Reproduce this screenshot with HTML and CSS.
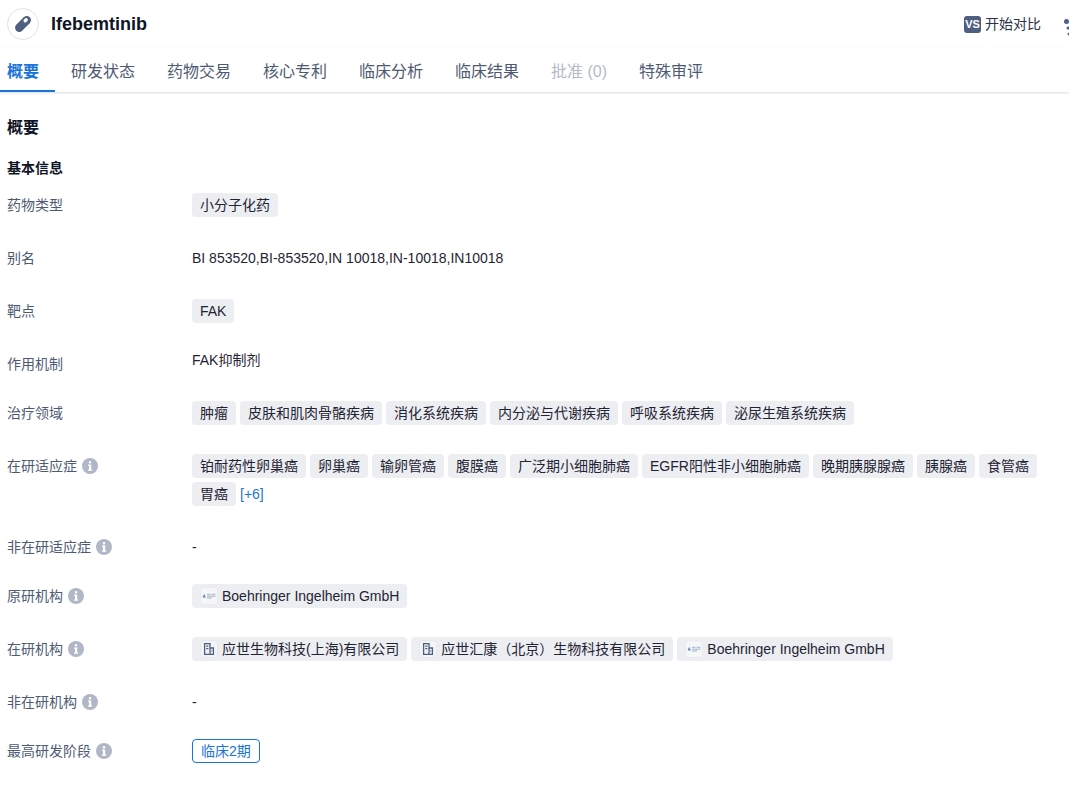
FILE: index.html
```html
<!DOCTYPE html>
<html lang="zh">
<head>
<meta charset="utf-8">
<title>Ifebemtinib</title>
<link rel="stylesheet" href="styles.css">
</head>
<body>
<svg class="defs" width="0" height="0" aria-hidden="true">
  <symbol id="info" viewBox="0 0 16 16">
    <circle cx="8" cy="8" r="8" fill="#b1b7c6"/>
    <rect x="6.800" y="3" width="2.400" height="2.400" rx="1" fill="#fff"/>
    <path d="M6 6.500h3.200v5h1v1.300H6v-1.300h1v-3.700H6z" fill="#fff"/>
  </symbol>
  <symbol id="logo" viewBox="0 0 18 18">
    <rect x=".5" y=".5" width="17" height="17" rx="3" fill="#f5f6f8" stroke="#e8eaef"/>
    <path d="M2.500 10.500 4.200 6.800l1.700 3.700z" fill="#6d8ab5"/>
    <path d="M7 7.300h3.500M11.500 7.300h4M7 9.200h8.500M7 11h5" stroke="#a3b2c8" stroke-width="1"/>
  </symbol>
  <symbol id="bldg" viewBox="0 0 18 18">
    <rect x=".5" y=".5" width="17" height="17" rx="3" fill="#f3f4f7" stroke="#e6e8ed"/>
    <path d="M4.600 14.400V3.600h5.400v10.800zM10 8h3.400v6.400H10M6.200 6.200h2.200M6.200 8.700h2.200M11.300 10.800h.8" fill="none" stroke="#4e5f80" stroke-width="1.300"/>
  </symbol>
</svg>
<header class="top">
  <div class="brand">
    <span class="avatar">
      <svg width="20" height="20" viewBox="0 0 20 20"><g transform="rotate(45 10 10)"><rect x="5.800" y=".5" width="8.400" height="19" rx="4.200" fill="#4e5f80"/><rect x="7.500" y="3" width="3.400" height="4.800" rx="1.700" fill="#fff"/></g></svg>
    </span>
    <h1 class="name">Ifebemtinib</h1>
  </div>
  <div class="actions">
    <span class="vs">VS</span><span class="compare">开始对比</span>
    <svg class="graph" width="16" height="18" viewBox="0 0 16 18"><circle cx="2.500" cy="2.500" r="2.500" fill="#4e5f80"/><circle cx="4" cy="9" r="1.500" fill="#4e5f80"/><circle cx="5" cy="15" r="1.500" fill="#4e5f80"/></svg>
  </div>
</header>
<nav class="tabs">
  <a class="tab active">概要</a>
  <a class="tab">研发状态</a>
  <a class="tab">药物交易</a>
  <a class="tab">核心专利</a>
  <a class="tab">临床分析</a>
  <a class="tab">临床结果</a>
  <a class="tab disabled">批准 (0)</a>
  <a class="tab">特殊审评</a>
</nav>
<main class="content">
  <h2 class="section">概要</h2>
  <h3 class="sub">基本信息</h3>
  <dl class="info">
    <div class="row tall"><dt class="label">药物类型</dt><dd class="val"><span class="tag">小分子化药</span></dd></div>
    <div class="row tall"><dt class="label">别名</dt><dd class="val text">BI 853520,BI-853520,IN 10018,IN-10018,IN10018</dd></div>
    <div class="row tall"><dt class="label">靶点</dt><dd class="val"><span class="tag">FAK</span></dd></div>
    <div class="row"><dt class="label">作用机制</dt><dd class="val lifted">FAK抑制剂</dd></div>
    <div class="row tall"><dt class="label">治疗领域</dt><dd class="val"><span class="tag">肿瘤</span><span class="tag">皮肤和肌肉骨骼疾病</span><span class="tag">消化系统疾病</span><span class="tag">内分泌与代谢疾病</span><span class="tag">呼吸系统疾病</span><span class="tag">泌尿生殖系统疾病</span></dd></div>
    <div class="row tall"><dt class="label">在研适应症<svg class="i"><use href="#info"/></svg></dt><dd class="val"><span class="tag">铂耐药性卵巢癌</span><span class="tag">卵巢癌</span><span class="tag">输卵管癌</span><span class="tag">腹膜癌</span><span class="tag">广泛期小细胞肺癌</span><span class="tag">EGFR阳性非小细胞肺癌</span><span class="tag">晚期胰腺腺癌</span><span class="tag">胰腺癌</span><span class="tag">食管癌</span><span class="tag">胃癌</span><a class="more">[+6]</a></dd></div>
    <div class="row"><dt class="label">非在研适应症<svg class="i"><use href="#info"/></svg></dt><dd class="val text">-</dd></div>
    <div class="row tall"><dt class="label">原研机构<svg class="i"><use href="#info"/></svg></dt><dd class="val"><span class="tag org"><svg class="ic"><use href="#logo"/></svg>Boehringer Ingelheim GmbH</span></dd></div>
    <div class="row tall"><dt class="label">在研机构<svg class="i"><use href="#info"/></svg></dt><dd class="val"><span class="tag org"><svg class="ic"><use href="#bldg"/></svg>应世生物科技(上海)有限公司</span><span class="tag org"><svg class="ic"><use href="#bldg"/></svg>应世汇康（北京）生物科技有限公司</span><span class="tag org"><svg class="ic"><use href="#logo"/></svg>Boehringer Ingelheim GmbH</span></dd></div>
    <div class="row"><dt class="label">非在研机构<svg class="i"><use href="#info"/></svg></dt><dd class="val text">-</dd></div>
    <div class="row"><dt class="label">最高研发阶段<svg class="i"><use href="#info"/></svg></dt><dd class="val"><span class="stage">临床2期</span></dd></div>
  </dl>
</main>
</body>
</html>
```
FILE: styles.css
```css
* { box-sizing: border-box; }
html, body { margin: 0; height: 100%; overflow: hidden; }
body {
  background: #fff;
  color: #1f2433;
  font-family: "Liberation Sans", "Noto Sans CJK SC", sans-serif;
  font-size: 14px;
}
.defs { position: absolute; }
.top {
  height: 48px;
  display: flex;
  align-items: center;
  justify-content: space-between;
  padding-left: 7px;
}
.brand { display: flex; align-items: center; gap: 12px; }
.avatar {
  width: 32px;
  height: 32px;
  border: 1px solid #dfe2e9;
  border-radius: 50%;
  display: flex;
  align-items: center;
  justify-content: center;
}
.name { margin: 0; font-size: 18px; line-height: 24px; font-weight: 700; color: #0f1526; }
.actions { display: flex; align-items: center; width: 105px; flex: none; overflow: hidden; }
.vs {
  width: 17px;
  height: 17px;
  flex: none;
  border-radius: 3px;
  background: #4e5f80;
  color: #fff;
  font-size: 11px;
  font-weight: 700;
  line-height: 17px;
  text-align: center;
  margin-right: 4px;
}
.compare { color: #2c3347; line-height: 20px; flex: none; }
.graph { flex: none; margin-left: 23px; margin-top: 7px; }
.tabs {
  height: 44px;
  display: flex;
  box-shadow: 0 1px 2px rgba(30, 40, 70, .16);
}
.tab {
  padding: 0 16px;
  font-size: 16px;
  line-height: 48px;
  height: 44px;
  color: #4e5a73;
}
.tab:first-child { padding-left: 7px; }
.tab.active { color: #1a73d9; font-weight: 700; border-bottom: 2px solid #1a73d9; }
.tab.disabled { color: #b4bac6; }
.content { padding: 0 20px 0 7px; }
.section { margin: 25px 0 0; font-size: 16px; line-height: 22px; font-weight: 700; color: #0f1526; }
.sub { margin: 20px 0 0; font-size: 14px; line-height: 18px; font-weight: 700; color: #0f1526; }
.info { margin: 16px 0 0; }
.row { display: flex; margin-bottom: 25px; min-height: 24px; }
.label {
  width: 185px;
  flex: none;
  display: flex;
  align-items: center;
  height: 24px;
  color: #4e5a73;
  line-height: 24px;
}
.i { width: 16px; height: 16px; margin-left: 5px; }
.val { margin: 0; flex: 1; display: flex; flex-wrap: wrap; align-content: flex-start; color: #1f2433; line-height: 24px; }
.row.tall .val { min-height: 28px; }
.val.lifted { margin-top: -4px; }
.tag {
  display: inline-flex;
  align-items: center;
  height: 24px;
  padding: 0 8px;
  margin: 0 4px 4px 0;
  background: #eceef2;
  border-radius: 4px;
  color: #1f2433;
  line-height: 24px;
}
.ic { width: 18px; height: 18px; margin-right: 4px; flex: none; }
.more { color: #1a73d9; line-height: 24px; }
.stage {
  height: 24px;
  padding: 0 8px;
  border: 1px solid #1a73d9;
  border-radius: 4px;
  color: #1a73d9;
  line-height: 22px;
}
```
